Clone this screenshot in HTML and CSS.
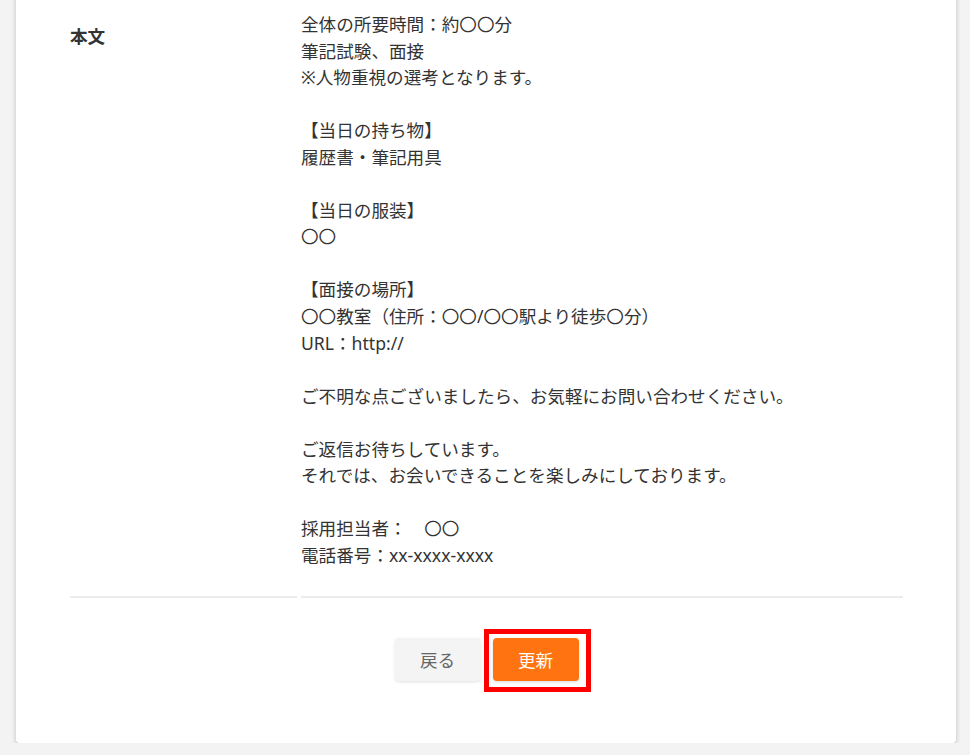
FILE: index.html
```html
<!DOCTYPE html>
<html lang="ja">
<head>
  <meta charset="UTF-8" />
  <meta name="viewport" content="width=device-width, initial-scale=1.0"/>
  <title>メール編集</title>
  <link rel="stylesheet" href="styles.css">
</head>
<body>
  <div class="card">
    <div class="form-table">
      <div class="form-label">本文</div>
      <div class="form-value">
        <p>全体の所要時間：約〇〇分<br>筆記試験、面接<br>※人物重視の選考となります。</p>
        <p>【当日の持ち物】<br>履歴書・筆記用具</p>
        <p>【当日の服装】<br>〇〇</p>
        <p>【面接の場所】<br>〇〇教室（住所：〇〇/〇〇駅より徒歩〇分）<br>URL：http://</p>
        <p>ご不明な点ございましたら、お気軽にお問い合わせください。</p>
        <p>ご返信お待ちしています。<br>それでは、お会いできることを楽しみにしております。</p>
        <p>採用担当者：　〇〇<br>電話番号：xx-xxxx-xxxx</p>
      </div>
    </div>

    <div class="actions">
      <button class="btn btn-back">戻る</button>
      <button class="btn btn-submit highlight">更新</button>
    </div>
  </div>
</body>
</html>
```

FILE: styles.css
```css
:root {
  --bg: #f3f3f3;
  --card: #fff;
  --text: #333;
  --line: #ececec;
  --orange: #ff7410;
}

body {
  margin: 0;
  background-color: var(--bg);
  color: var(--text);
  font-family: 'Noto Sans', 'Noto Sans CJK JP', sans-serif;
  font-size: 17.6px;
  line-height: 26.55px;
}

.card {
  margin: -20px 14px 0 16px;
  padding: 0 53px 62px 54px;
  background-color: var(--card);
  border-radius: 4px;
  box-shadow: 0 2px 5px rgba(0,0,0,0.22);
}

.form-table {
  display: grid;
  grid-template-columns: 227px 1fr;
  column-gap: 4px;
}

.form-label,
.form-value {
  border-bottom: 2px solid var(--line);
}

.form-label {
  padding-top: 43px;
  font-weight: 700;
}

.form-value {
  padding: 31px 0 28px;
}

.form-value p {
  margin: 0 0 26.55px;
}

.form-value p:last-child {
  margin-bottom: 0;
}

.actions {
  display: flex;
  justify-content: center;
  gap: 12px;
  padding-top: 40px;
}

.btn {
  width: 86px;
  height: 43px;
  border: none;
  border-radius: 4px;
  font-family: inherit;
  font-size: 17.6px;
  cursor: pointer;
}

.btn-back {
  background-color: #f4f4f4;
  color: #666;
  box-shadow: 0 1px 3px rgba(0,0,0,0.12);
}

.btn-submit {
  background-color: var(--orange);
  color: #fff;
  box-shadow: 0 1px 3px rgba(0,0,0,0.15);
}

/* annotation frame around the target button */
.highlight {
  position: relative;
}

.highlight::after {
  content: '';
  position: absolute;
  top: -9px;
  left: -9px;
  right: -12px;
  bottom: -11px;
  border: 5px solid #ff0000;
  pointer-events: none;
}
```
